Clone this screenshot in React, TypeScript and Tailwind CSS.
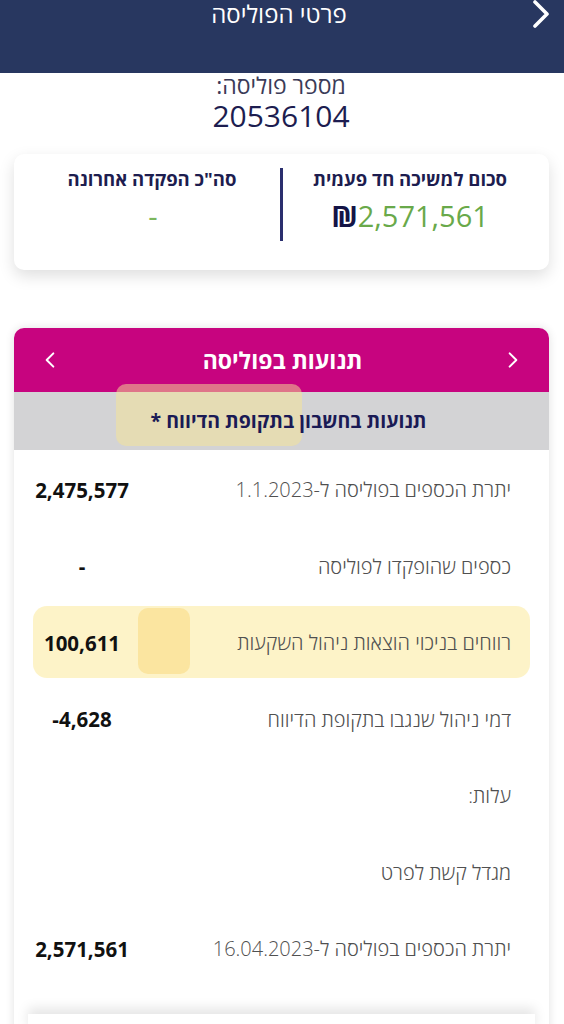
import React from "react";

const rows = [
  { label: "יתרת הכספים בפוליסה ל-1.1.2023", value: "2,475,577" },
  { label: "כספים שהופקדו לפוליסה", value: "-" },
  { label: "רווחים בניכוי הוצאות ניהול השקעות", value: "100,611" },
  { label: "דמי ניהול שנגבו בתקופת הדיווח", value: "-4,628" },
  { label: "עלות:", value: "" },
  { label: "מגדל קשת לפרט", value: "" },
  { label: "יתרת הכספים בפוליסה ל-16.04.2023", value: "2,571,561" },
];

const Chevron = ({ dir, className }: { dir: "left" | "right"; className?: string }) => (
  <svg viewBox="0 0 12 20" className={className} fill="none" stroke="currentColor" strokeWidth="2.4" strokeLinecap="round" strokeLinejoin="round">
    {dir === "right" ? <path d="M2 2l8 8-8 8" /> : <path d="M10 2l-8 8 8 8" />}
  </svg>
);

export default function App() {
  return (
    <div dir="rtl" className="relative w-[564px] h-[1024px] overflow-hidden bg-white" style={{ fontFamily: '"Open Sans", "Liberation Sans", "DejaVu Sans", sans-serif' }}>
      {/* top bar */}
      <div className="relative h-[73px] bg-[#283760] text-white">
        <div className="text-center text-[24px] leading-[28px] ml-[-6px]">פרטי הפוליסה</div>
        <Chevron dir="right" className="absolute right-[14px] top-[-2px] w-[18px] h-[32px]" />
      </div>

      <div className="text-center">
        <div className="text-[23px] leading-[24px] text-[#3b3b58] ml-[-2px]">מספר פוליסה:</div>
        <div className="text-[30px] leading-[34px] text-[#1d1d50] mt-[2px] ml-[-2px]">20536104</div>
      </div>

      {/* summary card */}
      <div className="mt-[21px] ml-[14px] mr-[15px] h-[116px] rounded-[10px] bg-white shadow-[0_6px_16px_rgba(0,0,0,0.13)] flex pt-[14px]">
        <div className="flex-1 flex flex-col items-center">
          <div className="text-[18.5px] leading-[22px] font-bold text-[#1d1d4f] mr-[12px]">סכום למשיכה חד פעמית</div>
          <div className="flex items-center mt-[9px] text-[29px] leading-[34px] mr-[12px]">
            <span className="text-[#69a94a]">2,571,561</span>
            <span className="text-[#141446] font-bold">₪</span>
          </div>
        </div>
        <div className="w-[3px] h-[73px] bg-[#2a2f6e]" />
        <div className="flex-1 flex flex-col items-center">
          <div className="text-[18.5px] leading-[22px] font-bold text-[#1d1d4f] mr-[-10px]">סה"כ הפקדה אחרונה</div>
          <div className="text-[29px] leading-[34px] mt-[9px] text-[#7cb65e] mr-[-12px]">-</div>
        </div>
      </div>

      {/* movements card */}
      <div className="mt-[58px] ml-[14px] mr-[15px] rounded-t-[10px] bg-white shadow-[0_0_10px_rgba(0,0,0,0.12)]">
        <div className="h-[64px] rounded-t-[10px] bg-[#c7047f] text-white flex items-center justify-between px-[31px]">
          <Chevron dir="right" className="w-[10px] h-[18px]" />
          <div className="text-[23px] font-bold ml-[2px]">תנועות בפוליסה</div>
          <Chevron dir="left" className="w-[10px] h-[18px]" />
        </div>
        <div className="h-[58px] bg-[#d3d3d5] flex items-center justify-center">
          <div className="relative z-10 text-[19.5px] font-bold text-[#1a1a55] ml-[14px]">תנועות בחשבון בתקופת הדיווח *</div>
        </div>
        <div className="pt-[2px] pb-[26px]">
          {rows.map((r) => (
            <div key={r.label} className="h-[76.5px] flex items-center justify-between pr-[38px] pl-[12px]">
              <div className="relative z-10 text-[20px] text-[#505050] font-light">{r.label}</div>
              <div dir="ltr" className="relative z-10 w-[112px] text-center text-[20.5px] font-bold text-[#111]">{r.value}</div>
            </div>
          ))}
        </div>
        <div className="mx-[14px] h-[20px] bg-white shadow-[0_-6px_12px_rgba(0,0,0,0.1)]" />
      </div>

      {/* marker highlights */}
      <div className="absolute left-[116px] top-[384px] w-[186px] h-[62px] rounded-[10px] bg-[#f7e593]/50" />
      <div className="absolute left-[33px] top-[606px] w-[497px] h-[72px] rounded-[14px] bg-[#fcebA3]/60" />
      <div className="absolute left-[138px] top-[608px] w-[52px] h-[66px] rounded-[10px] bg-[#fad878]/50" />
    </div>
  );
}
